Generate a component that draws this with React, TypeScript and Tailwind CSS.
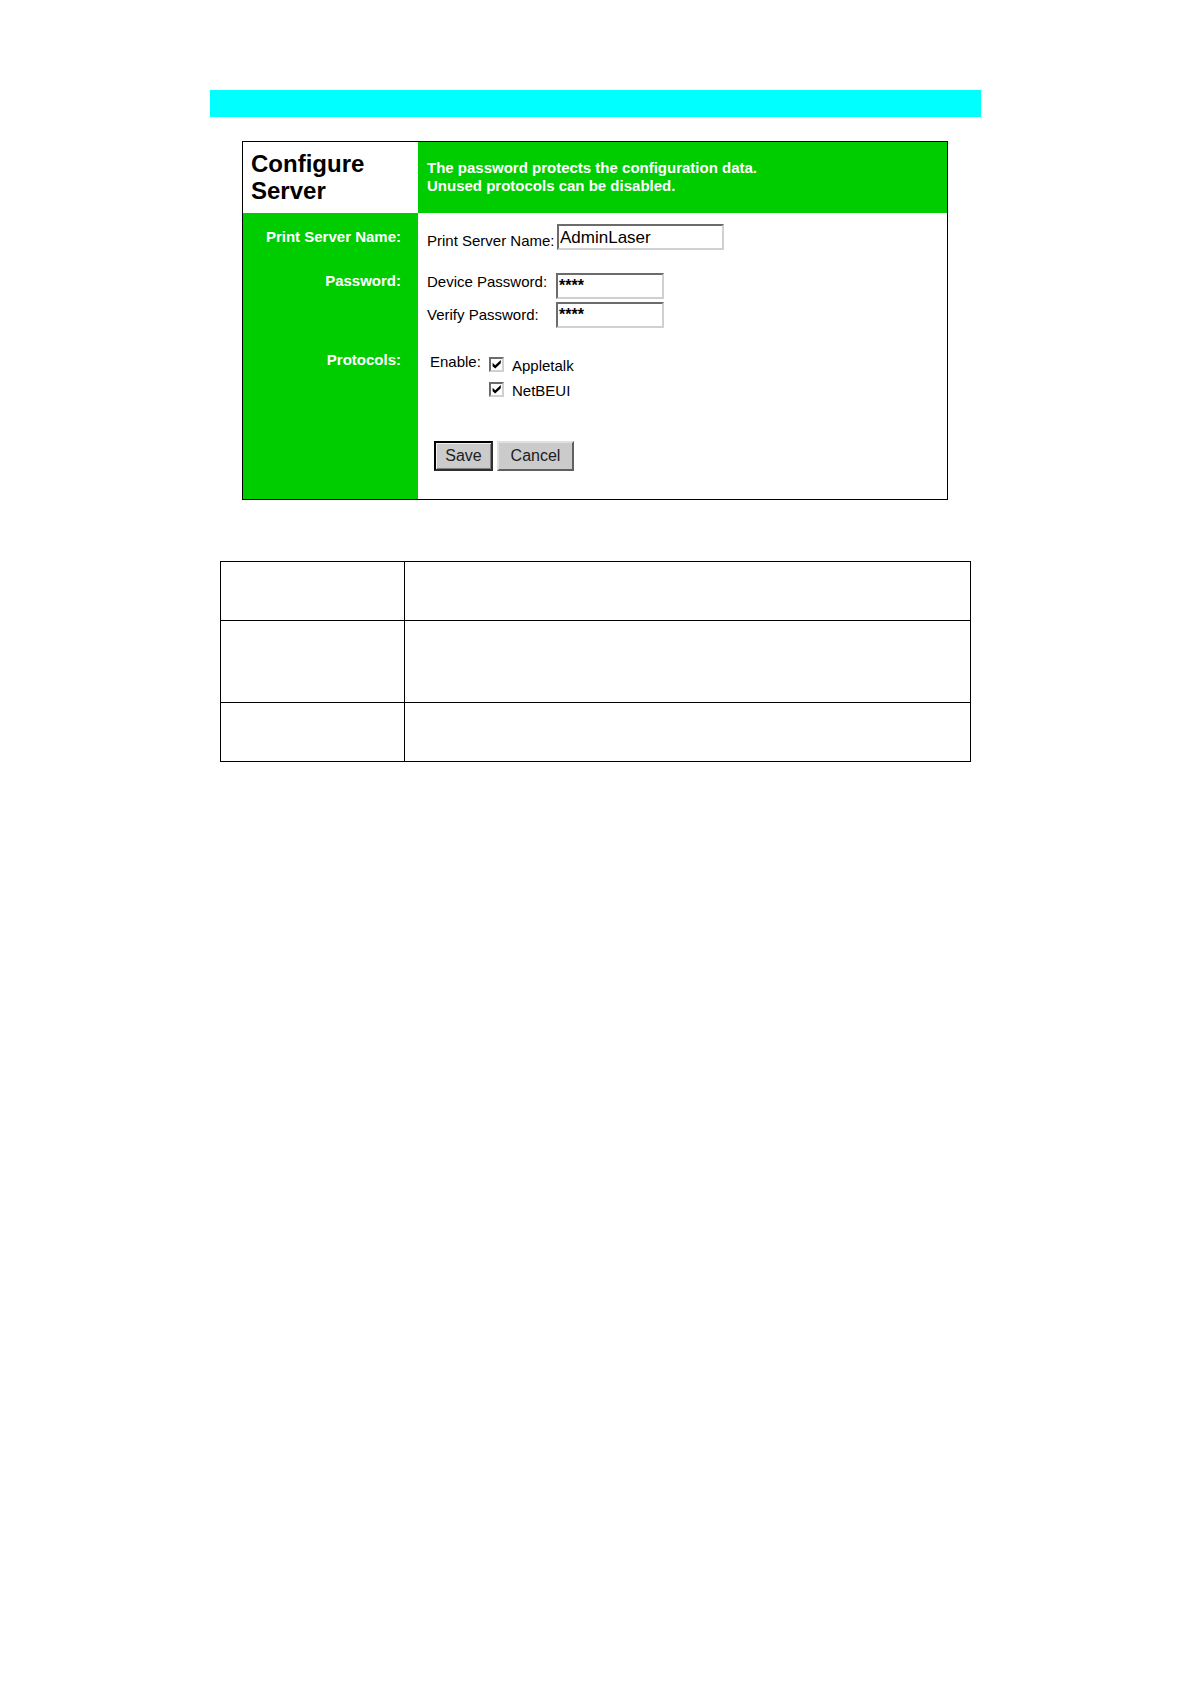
import React, { useState } from "react";

const protocolNames = ["Appletalk", "NetBEUI"];

const notesRows = [
  { id: "name", height: "h-[59px]" },
  { id: "password", height: "h-[82px]" },
  { id: "protocols", height: "h-[59px]" },
];

const sunken =
  "border-2 border-t-[#6b6b6b] border-l-[#6b6b6b] border-r-[#d0d0d0] border-b-[#d0d0d0] bg-white outline-none";

function RowTitle({ children, className }: { children?: React.ReactNode; className: string }) {
  return (
    <div className={`bg-[#00cd00] pr-[17px] text-right font-bold text-white ${className}`}>
      {children}
    </div>
  );
}

function TextField({ id, initial, className }: { id: string; initial: string; className: string }) {
  const [value, setValue] = useState(initial);

  return (
    <input
      id={id}
      type="text"
      value={value}
      onChange={(e) => setValue(e.target.value)}
      className={`h-[26px] px-px leading-[18px] ${sunken} ${className}`}
    />
  );
}

function ProtocolOption({ name }: { name: string }) {
  const [checked, setChecked] = useState(true);

  return (
    <label className="flex items-start gap-2">
      <span className="relative block size-[15px]">
        <input
          type="checkbox"
          checked={checked}
          onChange={() => setChecked(!checked)}
          className={`block size-[15px] appearance-none ${sunken}`}
        />
        {checked && (
          <svg viewBox="0 0 15 15" className="pointer-events-none absolute inset-0 size-[15px]">
            <path d="M3.6 5.8 L6.2 8.2 L11.8 3 V6.2 L6.2 11.6 L3.6 9.2 Z" fill="#000" />
          </svg>
        )}
      </span>
      {name}
    </label>
  );
}

export default function App() {
  return (
    <main className="w-full bg-white pt-[90px] font-['Liberation_Sans',Arial,sans-serif] text-[15px] leading-[18px] text-black">
      <div className="mx-auto h-[27px] w-full max-w-[771px] bg-[#00ffff]" />

      <form
        onSubmit={(e) => e.preventDefault()}
        className="mx-auto mt-6 grid w-full max-w-[706px] grid-cols-[175px_1fr] border border-black"
      >
        <h1 className="px-2 pt-2 pb-[9px] text-2xl leading-[27px] font-bold">
          Configure
          <br />
          Server
        </h1>
        <p className="bg-[#00cd00] pt-[17px] pl-[9px] font-bold text-white">
          The password protects the configuration data.
          <br />
          Unused protocols can be disabled.
        </p>

        <RowTitle className="pt-[15px]">Print Server Name:</RowTitle>
        <div className="flex items-end pt-[11px] pb-[14px] pl-[9px]">
          <label htmlFor="server-name" className="w-[130px]">
            Print Server Name:
          </label>
          <TextField id="server-name" initial="AdminLaser" className="w-[167px] pt-0.5 text-[17px]" />
        </div>

        <RowTitle className="pt-2">Password:</RowTitle>
        <div className="flex flex-col gap-[3px] pt-[9px] pb-[15px] pl-[9px]">
          <div className="flex items-start">
            <label htmlFor="device-password" className="w-[129px]">
              Device Password:
            </label>
            <TextField id="device-password" initial="****" className="w-[108px] text-base font-bold" />
          </div>
          <div className="flex items-center">
            <label htmlFor="verify-password" className="w-[129px]">
              Verify Password:
            </label>
            <TextField id="verify-password" initial="****" className="w-[108px] text-base font-bold" />
          </div>
        </div>

        <RowTitle className="pt-2">Protocols:</RowTitle>
        <fieldset className="flex pt-[10px] pb-3 pl-3">
          <span className="w-[59px]">Enable:</span>
          <div className="flex flex-col gap-[7px] pt-1">
            {protocolNames.map((name) => (
              <ProtocolOption key={name} name={name} />
            ))}
          </div>
        </fieldset>

        <RowTitle className="pt-2" />
        <div className="flex gap-1 pt-[29px] pb-7 pl-4 text-base leading-[18px]">
          <button
            type="submit"
            className="h-[30px] w-[59px] border-2 border-t-black border-r-[#303030] border-b-[#303030] border-l-black bg-[#cbcbcb] text-[#202020] shadow-[inset_1px_1px_0_#eeeeee,inset_-1px_-1px_0_#808080]"
          >
            Save
          </button>
          <button
            type="button"
            className="h-[30px] w-[77px] border-2 border-t-[#e0e0e0] border-r-[#606060] border-b-[#606060] border-l-[#e0e0e0] bg-[#cbcbcb] text-[#202020]"
          >
            Cancel
          </button>
        </div>
      </form>

      <table className="mx-auto mt-[61px] w-full max-w-[751px] table-fixed border-collapse">
        <tbody>
          {notesRows.map((row) => (
            <tr key={row.id} className={row.height}>
              <td className="w-[184px] border border-black" />
              <td className="border border-black" />
            </tr>
          ))}
        </tbody>
      </table>
    </main>
  );
}
